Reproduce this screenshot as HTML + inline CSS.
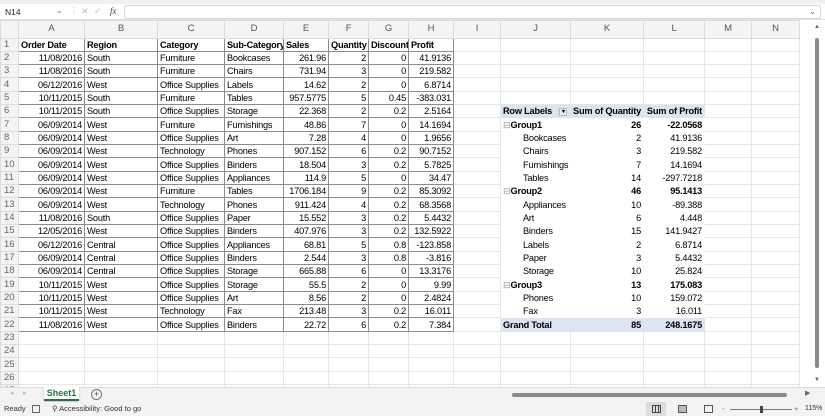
<!DOCTYPE html>
<html><head><meta charset="utf-8"><style>
*{margin:0;padding:0;box-sizing:border-box}
body{width:825px;height:416px;overflow:hidden;background:#fff;font-family:"Liberation Sans",Arial,sans-serif;position:relative;color:#000}
.top{position:absolute;left:0;top:0;width:825px;height:4px;background:#f0f0f0}
.fb{position:absolute;left:0;top:4px;width:825px;height:16px;background:#fff;border-bottom:1px solid #e0e0e0}
.nb{position:absolute;left:2px;top:1px;width:64px;height:14px;font-size:8.5px;line-height:14px;padding-left:3px;color:#222}
.fbx{position:absolute;left:124px;top:1px;width:697px;height:14px;border:1px solid #d6d6d6;border-radius:2px}
table{position:absolute;left:0;top:20px;width:799px;border-collapse:collapse;table-layout:fixed;font-size:9.2px;letter-spacing:-0.2px}
td{height:13.33px;line-height:12px;border:1px solid #e6e6e6;white-space:nowrap;overflow:hidden;padding:0 2px}
tr.h td{height:17.5px;background:#f4f4f4;color:#555;text-align:center;border-color:#dcdcdc;font-size:9.5px}
td.rh{background:#f4f4f4;color:#666;text-align:left;padding-left:3px;border-color:#dcdcdc;font-size:9.5px;letter-spacing:0}
td.d{border-color:#8c8c8c}
td.r{text-align:right}
td.b{font-weight:bold}
td.pv{border-color:#fff}
td.ph{background:#dce3f1;font-weight:bold;border-color:#dce3f1}
td.pg{font-weight:bold;border-top:1px solid #b4c3e0;border-left-color:#fff;border-right-color:#fff;border-bottom-color:#fff}
td.pi{padding-left:22px}
.vs{position:absolute;left:811px;top:22px;width:14px;height:366px;background:#fff}
.vt{position:absolute;width:4px;height:330px;background:#8a8a8a;border-radius:2px}
.tabs{position:absolute;left:0;top:387px;width:825px;height:15px;background:#f3f3f3;border-top:1px solid #ddd}
.tab{position:absolute;left:44px;top:-1px;width:35px;height:14px;background:#fff;color:#217346;font-weight:bold;font-size:9px;text-align:center;line-height:13px;border-bottom:2px solid #217346;box-shadow:0 1px 2px #bbb}
.hs{position:absolute;left:512px;top:5px;width:275px;height:4px;background:#8a8a8a;border-radius:2px}
.sb{position:absolute;left:0;top:402px;width:825px;height:14px;background:#f3f3f3;font-size:7.5px;color:#333;line-height:14px}
</style></head><body>
<div class="top"></div>
<div class="fb"><div class="nb">N14</div>
<span style="position:absolute;left:56px;top:0;font-size:8px;color:#777;line-height:14px">⌄</span>
<span style="position:absolute;left:70px;top:0;font-size:8px;color:#bbb;line-height:14px">⋮</span>
<span style="position:absolute;left:81px;top:0;font-size:9px;color:#bbb;line-height:14px">✕</span>
<span style="position:absolute;left:94px;top:0;font-size:9px;color:#bbb;line-height:14px">✓</span>
<span style="position:absolute;left:110px;top:0;font-size:9px;color:#444;line-height:14px;font-style:italic;font-family:'Liberation Serif',serif">fx</span>
<div class="fbx"><span style="position:absolute;right:4px;top:0;font-size:8px;color:#666;line-height:12px">⌄</span></div></div>
<table>
<colgroup><col style="width:18px"><col style="width:66px"><col style="width:73px"><col style="width:67px"><col style="width:59px"><col style="width:45px"><col style="width:40px"><col style="width:40px"><col style="width:45px"><col style="width:47px"><col style="width:70px"><col style="width:73px"><col style="width:61px"><col style="width:47px"><col style="width:48px"></colgroup>
<tr class="h"><td></td><td>A</td><td>B</td><td>C</td><td>D</td><td>E</td><td>F</td><td>G</td><td>H</td><td>I</td><td>J</td><td>K</td><td>L</td><td>M</td><td>N</td></tr>
<tr><td class="rh">1</td><td class="d b">Order Date</td><td class="d b">Region</td><td class="d b">Category</td><td class="d b">Sub-Category</td><td class="d b">Sales</td><td class="d b">Quantity</td><td class="d b">Discount</td><td class="d b">Profit</td><td></td><td></td><td></td><td></td><td></td><td></td></tr>
<tr><td class="rh">2</td><td class="d r">11/08/2016</td><td class="d">South</td><td class="d">Furniture</td><td class="d">Bookcases</td><td class="d r">261.96</td><td class="d r">2</td><td class="d r">0</td><td class="d r">41.9136</td><td></td><td></td><td></td><td></td><td></td><td></td></tr>
<tr><td class="rh">3</td><td class="d r">11/08/2016</td><td class="d">South</td><td class="d">Furniture</td><td class="d">Chairs</td><td class="d r">731.94</td><td class="d r">3</td><td class="d r">0</td><td class="d r">219.582</td><td></td><td></td><td></td><td></td><td></td><td></td></tr>
<tr><td class="rh">4</td><td class="d r">06/12/2016</td><td class="d">West</td><td class="d">Office Supplies</td><td class="d">Labels</td><td class="d r">14.62</td><td class="d r">2</td><td class="d r">0</td><td class="d r">6.8714</td><td></td><td></td><td></td><td></td><td></td><td></td></tr>
<tr><td class="rh">5</td><td class="d r">10/11/2015</td><td class="d">South</td><td class="d">Furniture</td><td class="d">Tables</td><td class="d r">957.5775</td><td class="d r">5</td><td class="d r">0.45</td><td class="d r">-383.031</td><td></td><td></td><td></td><td></td><td></td><td></td></tr>
<tr><td class="rh">6</td><td class="d r">10/11/2015</td><td class="d">South</td><td class="d">Office Supplies</td><td class="d">Storage</td><td class="d r">22.368</td><td class="d r">2</td><td class="d r">0.2</td><td class="d r">2.5164</td><td></td><td class="ph">Row Labels <span style="display:inline-block;width:8px;height:8px;background:#eee;border:1px solid #bbb;font-size:6px;line-height:6px;text-align:center;vertical-align:middle;margin-left:5px">▾</span></td><td class="ph r">Sum of Quantity</td><td class="ph r">Sum of Profit</td><td></td><td></td></tr>
<tr><td class="rh">7</td><td class="d r">06/09/2014</td><td class="d">West</td><td class="d">Furniture</td><td class="d">Furnishings</td><td class="d r">48.86</td><td class="d r">7</td><td class="d r">0</td><td class="d r">14.1694</td><td></td><td class="pg"><span style="color:#999;font-weight:normal">⊟</span>Group1</td><td class="pg r">26</td><td class="pg r">-22.0568</td><td></td><td></td></tr>
<tr><td class="rh">8</td><td class="d r">06/09/2014</td><td class="d">West</td><td class="d">Office Supplies</td><td class="d">Art</td><td class="d r">7.28</td><td class="d r">4</td><td class="d r">0</td><td class="d r">1.9656</td><td></td><td class="pv pi">Bookcases</td><td class="pv r">2</td><td class="pv r">41.9136</td><td></td><td></td></tr>
<tr><td class="rh">9</td><td class="d r">06/09/2014</td><td class="d">West</td><td class="d">Technology</td><td class="d">Phones</td><td class="d r">907.152</td><td class="d r">6</td><td class="d r">0.2</td><td class="d r">90.7152</td><td></td><td class="pv pi">Chairs</td><td class="pv r">3</td><td class="pv r">219.582</td><td></td><td></td></tr>
<tr><td class="rh">10</td><td class="d r">06/09/2014</td><td class="d">West</td><td class="d">Office Supplies</td><td class="d">Binders</td><td class="d r">18.504</td><td class="d r">3</td><td class="d r">0.2</td><td class="d r">5.7825</td><td></td><td class="pv pi">Furnishings</td><td class="pv r">7</td><td class="pv r">14.1694</td><td></td><td></td></tr>
<tr><td class="rh">11</td><td class="d r">06/09/2014</td><td class="d">West</td><td class="d">Office Supplies</td><td class="d">Appliances</td><td class="d r">114.9</td><td class="d r">5</td><td class="d r">0</td><td class="d r">34.47</td><td></td><td class="pv pi">Tables</td><td class="pv r">14</td><td class="pv r">-297.7218</td><td></td><td></td></tr>
<tr><td class="rh">12</td><td class="d r">06/09/2014</td><td class="d">West</td><td class="d">Furniture</td><td class="d">Tables</td><td class="d r">1706.184</td><td class="d r">9</td><td class="d r">0.2</td><td class="d r">85.3092</td><td></td><td class="pg"><span style="color:#999;font-weight:normal">⊟</span>Group2</td><td class="pg r">46</td><td class="pg r">95.1413</td><td></td><td></td></tr>
<tr><td class="rh">13</td><td class="d r">06/09/2014</td><td class="d">West</td><td class="d">Technology</td><td class="d">Phones</td><td class="d r">911.424</td><td class="d r">4</td><td class="d r">0.2</td><td class="d r">68.3568</td><td></td><td class="pv pi">Appliances <span style="color:#e00;font-size:7px;vertical-align:top;margin-left:6px">•</span></td><td class="pv r">10</td><td class="pv r">-89.388</td><td></td><td></td></tr>
<tr><td class="rh">14</td><td class="d r">11/08/2016</td><td class="d">South</td><td class="d">Office Supplies</td><td class="d">Paper</td><td class="d r">15.552</td><td class="d r">3</td><td class="d r">0.2</td><td class="d r">5.4432</td><td></td><td class="pv pi">Art</td><td class="pv r">6</td><td class="pv r">4.448</td><td></td><td></td></tr>
<tr><td class="rh">15</td><td class="d r">12/05/2016</td><td class="d">West</td><td class="d">Office Supplies</td><td class="d">Binders</td><td class="d r">407.976</td><td class="d r">3</td><td class="d r">0.2</td><td class="d r">132.5922</td><td></td><td class="pv pi">Binders</td><td class="pv r">15</td><td class="pv r">141.9427</td><td></td><td></td></tr>
<tr><td class="rh">16</td><td class="d r">06/12/2016</td><td class="d">Central</td><td class="d">Office Supplies</td><td class="d">Appliances</td><td class="d r">68.81</td><td class="d r">5</td><td class="d r">0.8</td><td class="d r">-123.858</td><td></td><td class="pv pi">Labels</td><td class="pv r">2</td><td class="pv r">6.8714</td><td></td><td></td></tr>
<tr><td class="rh">17</td><td class="d r">06/09/2014</td><td class="d">Central</td><td class="d">Office Supplies</td><td class="d">Binders</td><td class="d r">2.544</td><td class="d r">3</td><td class="d r">0.8</td><td class="d r">-3.816</td><td></td><td class="pv pi">Paper</td><td class="pv r">3</td><td class="pv r">5.4432</td><td></td><td></td></tr>
<tr><td class="rh">18</td><td class="d r">06/09/2014</td><td class="d">Central</td><td class="d">Office Supplies</td><td class="d">Storage</td><td class="d r">665.88</td><td class="d r">6</td><td class="d r">0</td><td class="d r">13.3176</td><td></td><td class="pv pi">Storage</td><td class="pv r">10</td><td class="pv r">25.824</td><td></td><td></td></tr>
<tr><td class="rh">19</td><td class="d r">10/11/2015</td><td class="d">West</td><td class="d">Office Supplies</td><td class="d">Storage</td><td class="d r">55.5</td><td class="d r">2</td><td class="d r">0</td><td class="d r">9.99</td><td></td><td class="pg"><span style="color:#999;font-weight:normal">⊟</span>Group3</td><td class="pg r">13</td><td class="pg r">175.083</td><td></td><td></td></tr>
<tr><td class="rh">20</td><td class="d r">10/11/2015</td><td class="d">West</td><td class="d">Office Supplies</td><td class="d">Art</td><td class="d r">8.56</td><td class="d r">2</td><td class="d r">0</td><td class="d r">2.4824</td><td></td><td class="pv pi">Phones</td><td class="pv r">10</td><td class="pv r">159.072</td><td></td><td></td></tr>
<tr><td class="rh">21</td><td class="d r">10/11/2015</td><td class="d">West</td><td class="d">Technology</td><td class="d">Fax</td><td class="d r">213.48</td><td class="d r">3</td><td class="d r">0.2</td><td class="d r">16.011</td><td></td><td class="pv pi">Fax</td><td class="pv r">3</td><td class="pv r">16.011</td><td></td><td></td></tr>
<tr><td class="rh">22</td><td class="d r">11/08/2016</td><td class="d">West</td><td class="d">Office Supplies</td><td class="d">Binders</td><td class="d r">22.72</td><td class="d r">6</td><td class="d r">0.2</td><td class="d r">7.384</td><td></td><td class="ph">Grand Total</td><td class="ph r">85</td><td class="ph r">248.1675</td><td></td><td></td></tr>
<tr><td class="rh">23</td><td></td><td></td><td></td><td></td><td></td><td></td><td></td><td></td><td></td><td></td><td></td><td></td><td></td><td></td></tr>
<tr><td class="rh">24</td><td></td><td></td><td></td><td></td><td></td><td></td><td></td><td></td><td></td><td></td><td></td><td></td><td></td><td></td></tr>
<tr><td class="rh">25</td><td></td><td></td><td></td><td></td><td></td><td></td><td></td><td></td><td></td><td></td><td></td><td></td><td></td><td></td></tr>
<tr><td class="rh">26</td><td></td><td></td><td></td><td></td><td></td><td></td><td></td><td></td><td></td><td></td><td></td><td></td><td></td><td></td></tr>
<tr><td class="rh">27</td><td></td><td></td><td></td><td></td><td></td><td></td><td></td><td></td><td></td><td></td><td></td><td></td><td></td><td></td></tr>
</table>
<div class="vs"><span style="position:absolute;left:3px;top:2px;font-size:6px;color:#666">▲</span><div class="vt" style="left:4px;top:16px"></div><span style="position:absolute;left:3px;top:355px;font-size:6px;color:#666">▼</span></div>
<div class="tabs">
<span style="position:absolute;left:10px;top:1px;font-size:7px;color:#bbb">◂</span>
<span style="position:absolute;left:23px;top:1px;font-size:7px;color:#bbb">▸</span>
<div class="tab">Sheet1</div>
<span style="position:absolute;left:91px;top:1px;width:11px;height:11px;border:1px solid #777;border-radius:50%;font-size:9px;line-height:9px;text-align:center;color:#555">+</span>
<div class="hs"></div>
<span style="position:absolute;left:805px;top:1px;font-size:7px;color:#666">▶</span>
</div>
<div class="sb">
<span style="position:absolute;left:4px">Ready</span>
<span style="position:absolute;left:32px;top:3px;width:8px;height:8px;border:1px solid #666"></span>
<span style="position:absolute;left:52px">⚲ Accessibility: Good to go</span>
<span style="position:absolute;left:646px;top:0;width:20px;height:14px;background:#dcdcdc"></span>
<span style="position:absolute;left:652px;top:3px;width:9px;height:8px;border:1px solid #444;background:repeating-linear-gradient(90deg,transparent 0 2px,#444 2px 3px)"></span>
<span style="position:absolute;left:678px;top:3px;width:9px;height:8px;border:1px solid #555;background:#bbb"></span>
<span style="position:absolute;left:704px;top:3px;width:9px;height:8px;border:1px solid #555"></span>
<span style="position:absolute;left:722px;color:#777">-</span>
<span style="position:absolute;left:730px;top:7px;width:62px;height:1px;background:#777"></span>
<span style="position:absolute;left:760px;top:4px;width:3px;height:7px;background:#444"></span>
<span style="position:absolute;left:794px;color:#777">+</span>
<span style="position:absolute;left:805px;font-size:7px">115%</span>
</div>
</body></html>
